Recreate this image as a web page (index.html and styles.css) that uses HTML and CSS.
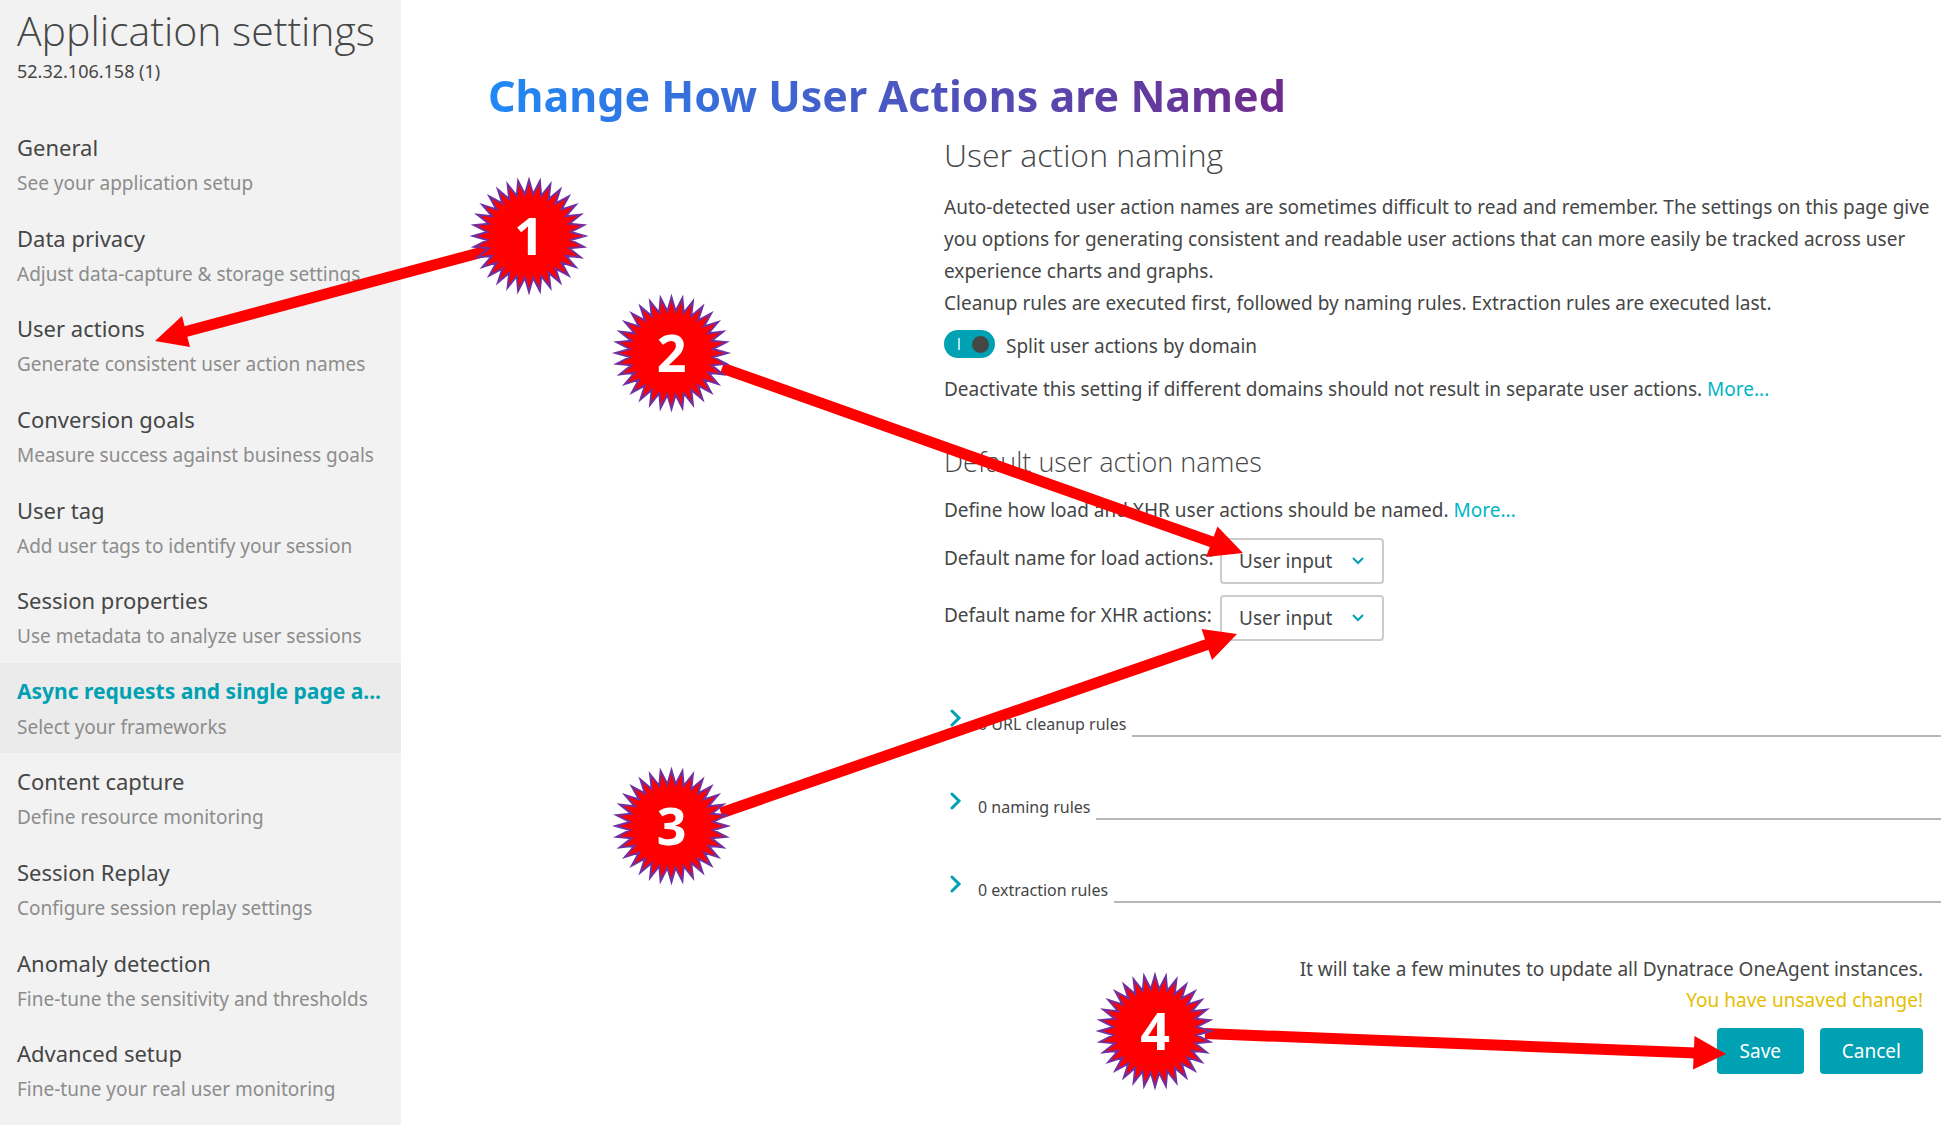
FILE: index.html
```html
<!DOCTYPE html>
<html lang="en">
<head>
<meta charset="utf-8">
<meta name="viewport" content="width=device-width, initial-scale=1">
<title>Application settings - User action naming</title>
<link rel="stylesheet" href="styles.css">
</head>
<body>
<div class="page">
  <aside class="sidebar">
    <h1 class="sidebar-title">Application settings</h1>
    <p class="sidebar-app">52.32.106.158 (1)</p>
    <nav class="menu" aria-label="Application settings">
      <a class="menu-item" href="#general"><span class="menu-name">General</span><span class="menu-desc">See your application setup</span></a>
      <a class="menu-item" href="#privacy"><span class="menu-name">Data privacy</span><span class="menu-desc">Adjust data-capture &amp; storage settings</span></a>
      <a class="menu-item" href="#actions"><span class="menu-name">User actions</span><span class="menu-desc">Generate consistent user action names</span></a>
      <a class="menu-item" href="#goals"><span class="menu-name">Conversion goals</span><span class="menu-desc">Measure success against business goals</span></a>
      <a class="menu-item" href="#tag"><span class="menu-name">User tag</span><span class="menu-desc">Add user tags to identify your session</span></a>
      <a class="menu-item" href="#properties"><span class="menu-name">Session properties</span><span class="menu-desc">Use metadata to analyze user sessions</span></a>
      <a class="menu-item menu-item-active" href="#async" aria-current="page"><span class="menu-name">Async requests and single page a...</span><span class="menu-desc">Select your frameworks</span></a>
      <a class="menu-item" href="#content"><span class="menu-name">Content capture</span><span class="menu-desc">Define resource monitoring</span></a>
      <a class="menu-item" href="#replay"><span class="menu-name">Session Replay</span><span class="menu-desc">Configure session replay settings</span></a>
      <a class="menu-item" href="#anomaly"><span class="menu-name">Anomaly detection</span><span class="menu-desc">Fine-tune the sensitivity and thresholds</span></a>
      <a class="menu-item" href="#advanced"><span class="menu-name">Advanced setup</span><span class="menu-desc">Fine-tune your real user monitoring</span></a>
    </nav>
  </aside>

  <main class="main">
    <h2 class="slide-title"><span class="slide-title-text">Change How User Actions are Named</span></h2>
    <div class="content">
      <h3 class="heading">User action naming</h3>
      <p class="intro">Auto-detected user action names are sometimes difficult to read and remember. The settings on this page give you options for generating consistent and readable user actions that can more easily be tracked across user experience charts and graphs.<br>Cleanup rules are executed first, followed by naming rules. Extraction rules are executed last.</p>
      <div class="switch-row">
        <input class="switch" type="checkbox" id="split" checked>
        <label for="split">Split user actions by domain</label>
      </div>
      <p class="note">Deactivate this setting if different domains should not result in separate user actions. <a class="link" href="#more-split">More...</a></p>

      <h4 class="subheading">Default user action names</h4>
      <p class="define">Define how load and XHR user actions should be named. <a class="link" href="#more-names">More...</a></p>
      <div class="fields">
        <div class="field">
          <label class="field-label" for="load-name">Default name for load actions:</label>
          <span class="select-box">
            <select class="select" id="load-name"><option>User input</option></select>
            <svg class="select-arrow" width="14" height="10" viewBox="0 0 14 10" aria-hidden="true"><path d="M2 2l5 5 5-5"/></svg>
          </span>
        </div>
        <div class="field">
          <label class="field-label" for="xhr-name">Default name for XHR actions:</label>
          <span class="select-box">
            <select class="select" id="xhr-name"><option>User input</option></select>
            <svg class="select-arrow" width="14" height="10" viewBox="0 0 14 10" aria-hidden="true"><path d="M2 2l5 5 5-5"/></svg>
          </span>
        </div>
      </div>

      <div class="rules">
        <div class="rule"><button class="rule-button" type="button" aria-expanded="false"><svg class="chevron" width="12" height="18" viewBox="0 0 12 18" aria-hidden="true"><path d="M2 2l7 7-7 7"/></svg><span class="rule-name">0 URL cleanup rules</span></button></div>
        <div class="rule"><button class="rule-button" type="button" aria-expanded="false"><svg class="chevron" width="12" height="18" viewBox="0 0 12 18" aria-hidden="true"><path d="M2 2l7 7-7 7"/></svg><span class="rule-name">0 naming rules</span></button></div>
        <div class="rule"><button class="rule-button" type="button" aria-expanded="false"><svg class="chevron" width="12" height="18" viewBox="0 0 12 18" aria-hidden="true"><path d="M2 2l7 7-7 7"/></svg><span class="rule-name">0 extraction rules</span></button></div>
      </div>

      <div class="footer">
        <p class="footer-text">It will take a few minutes to update all Dynatrace OneAgent instances.</p>
        <p class="footer-text footer-warning">You have unsaved change!</p>
        <div class="actions">
          <button class="button" type="button">Save</button>
          <button class="button" type="button">Cancel</button>
        </div>
      </div>
    </div>
  </main>

  <svg class="callouts" width="1959" height="1125" viewBox="0 0 1959 1125" role="img" aria-label="Steps 1 to 4">
    <defs>
      <path id="seal" d="M56 0L41.8 4.1 54.9 10.9 40.2 12.2 51.7 21.4 37 19.8 46.6 31.1 32.5 26.6 39.6 39.6 26.6 32.5 31.1 46.6 19.8 37 21.4 51.7 12.2 40.2 10.9 54.9 4.1 41.8 0 56 -4.1 41.8 -10.9 54.9 -12.2 40.2 -21.4 51.7 -19.8 37 -31.1 46.6 -26.6 32.5 -39.6 39.6 -32.5 26.6 -46.6 31.1 -37 19.8 -51.7 21.4 -40.2 12.2 -54.9 10.9 -41.8 4.1 -56 0 -41.8 -4.1 -54.9 -10.9 -40.2 -12.2 -51.7 -21.4 -37 -19.8 -46.6 -31.1 -32.5 -26.6 -39.6 -39.6 -26.6 -32.5 -31.1 -46.6 -19.8 -37 -21.4 -51.7 -12.2 -40.2 -10.9 -54.9 -4.1 -41.8 0 -56 4.1 -41.8 10.9 -54.9 12.2 -40.2 21.4 -51.7 19.8 -37 31.1 -46.6 26.6 -32.5 39.6 -39.6 32.5 -26.6 46.6 -31.1 37 -19.8 51.7 -21.4 40.2 -12.2 54.9 -10.9 41.8 -4.1Z"/>
    </defs>
    <g class="arrow">
      <path d="M490 250L184 332M722 368L1215 543M721 813L1210 643.500M1205 1033.500L1696 1053"/>
    </g>
    <g class="arrow-head">
      <path d="M155 341L182 316 190 347ZM1243 553L1217.500 526.500 1206 557ZM1237 634L1201.500 629 1212 660ZM1726 1054L1694.500 1036 1693 1069.500Z"/>
    </g>
    <g transform="translate(529 236)"><use class="seal" href="#seal"/><text class="seal-number" y="19">1</text></g>
    <g transform="translate(671.500 353)"><use class="seal" href="#seal"/><text class="seal-number" y="19">2</text></g>
    <g transform="translate(671.500 826)"><use class="seal" href="#seal"/><text class="seal-number" y="19">3</text></g>
    <g transform="translate(1155 1031)"><use class="seal" href="#seal"/><text class="seal-number" y="19">4</text></g>
  </svg>
</div>
</body>
</html>
```
FILE: styles.css
```css
* {
  box-sizing: border-box;
}

body {
  margin: 0;
  background: #fff;
  color: #454646;
  font: 400 19px/32px "Noto Sans", "Open Sans", sans-serif;
}

h1, h2, h3, h4, p {
  margin: 0;
}

button, select {
  font: inherit;
  color: inherit;
  cursor: pointer;
}

.page {
  position: relative;
  display: flex;
  min-height: 100vh;
  overflow: hidden;
}

/* Sidebar */
.sidebar {
  display: flex;
  flex-direction: column;
  flex: none;
  width: 401px;
  padding: 4px 0 9px;
  background: #f2f2f2;
}

.sidebar-title {
  padding: 0 17px;
  font: 300 41px/52px "Open Sans", "Noto Sans", sans-serif;
}

.sidebar-app {
  padding: 3px 17px 36px;
  font-size: 18px;
  line-height: 24px;
}

.menu {
  display: grid;
  grid-auto-rows: 1fr;
  flex: 1;
}

.menu-item {
  display: flex;
  flex-direction: column;
  gap: 7px;
  padding: 13px 17px 0;
  color: #454646;
  text-decoration: none;
}

.menu-name {
  font-size: 22px;
  line-height: 30px;
}

.menu-desc {
  color: #8c8c8c;
  line-height: 28px;
}

.menu-item-active {
  background: #ebebeb;
}

.menu-item-active .menu-name {
  color: #00a1b2;
  font-size: 21px;
  font-weight: 700;
}

/* Main column */
.main {
  flex: 1;
  min-width: 0;
  padding: 68px 18px 0 87px;
}

.slide-title {
  font-size: 43px;
  font-weight: 700;
  line-height: 56px;
}

.slide-title-text {
  background: linear-gradient(90deg, #2089f6, #4a58c4 50%, #702b8c);
  background-clip: text;
  -webkit-background-clip: text;
  color: transparent;
}

.content {
  padding: 9px 0 0 456px;
}

.heading {
  font: 300 32px/44px "Open Sans", "Noto Sans", sans-serif;
}

.intro {
  margin-top: 14px;
}

.switch-row {
  display: flex;
  align-items: flex-start;
  gap: 11px;
  margin-top: 11px;
}

.switch {
  display: flex;
  align-items: center;
  justify-content: space-between;
  appearance: none;
  width: 51px;
  height: 28px;
  margin: 0;
  padding: 0 6px 0 14px;
  border-radius: 14px;
  background: #00a1b2;
}

.switch::before {
  content: "";
  width: 2px;
  height: 12px;
  background: #b3e3e8;
}

.switch::after {
  content: "";
  width: 17px;
  height: 17px;
  border-radius: 50%;
  background: #454646;
}

.note {
  margin-top: 11px;
}

.link {
  color: #00b4c8;
  text-decoration: none;
}

.subheading {
  margin-top: 39px;
  font: 300 27px/36px "Open Sans", "Noto Sans", sans-serif;
}

.define {
  margin-top: 14px;
}

.fields {
  display: flex;
  flex-direction: column;
  gap: 11px;
  margin-top: 12px;
}

.field {
  display: flex;
  align-items: flex-start;
  gap: 5px;
}

.field-label {
  min-width: 271px;
  padding-top: 4px;
}

.select-box {
  display: grid;
  align-items: center;
  width: 164px;
}

.select {
  grid-area: 1 / 1;
  appearance: none;
  width: 100%;
  height: 46px;
  padding: 0 40px 0 17px;
  border: 2px solid #ccc;
  border-radius: 4px;
  background: #fff;
}

.select-arrow {
  grid-area: 1 / 1;
  justify-self: end;
  margin-right: 19px;
  fill: none;
  stroke: #00a1b2;
  stroke-width: 2;
  pointer-events: none;
}

/* Collapsed rule groups */
.rules {
  display: flex;
  flex-direction: column;
  gap: 53px;
  margin-top: 66px;
}

.rule {
  display: flex;
  gap: 6px;
  height: 30px;
}

.rule::after {
  content: "";
  flex: 1;
  border-bottom: 2px solid #b7b7b7;
}

.rule-button {
  display: flex;
  align-items: flex-start;
  gap: 16px;
  padding: 2px 0 0 6px;
  border: 0;
  background: none;
}

.chevron {
  fill: none;
  stroke: #00a1b2;
  stroke-width: 3;
  stroke-linecap: round;
}

.rule-name {
  padding-top: 4px;
  font-size: 16px;
  line-height: 22px;
}

/* Footer */
.footer {
  display: flex;
  flex-direction: column;
  align-items: flex-end;
  margin-top: 51px;
  padding-right: 18px;
}

.footer-text {
  line-height: 31px;
}

.footer-warning {
  color: #e6be00;
}

.actions {
  display: flex;
  gap: 16px;
  margin-top: 12px;
}

.button {
  min-width: 87px;
  height: 46px;
  padding: 0 22px;
  border: 0;
  border-radius: 4px;
  background: #00a1b2;
  color: #fff;
}

/* Numbered callouts drawn over the page */
.callouts {
  position: absolute;
  top: 0;
  left: 0;
  pointer-events: none;
}

.arrow {
  fill: none;
  stroke: #f00;
  stroke-width: 11;
}

.arrow-head {
  fill: #f00;
}

.seal {
  fill: #f00;
  stroke: #7030a0;
  stroke-width: 2;
  stroke-miterlimit: 10;
}

.seal-number {
  fill: #fff;
  font-size: 52px;
  font-weight: 700;
  text-anchor: middle;
}
```
